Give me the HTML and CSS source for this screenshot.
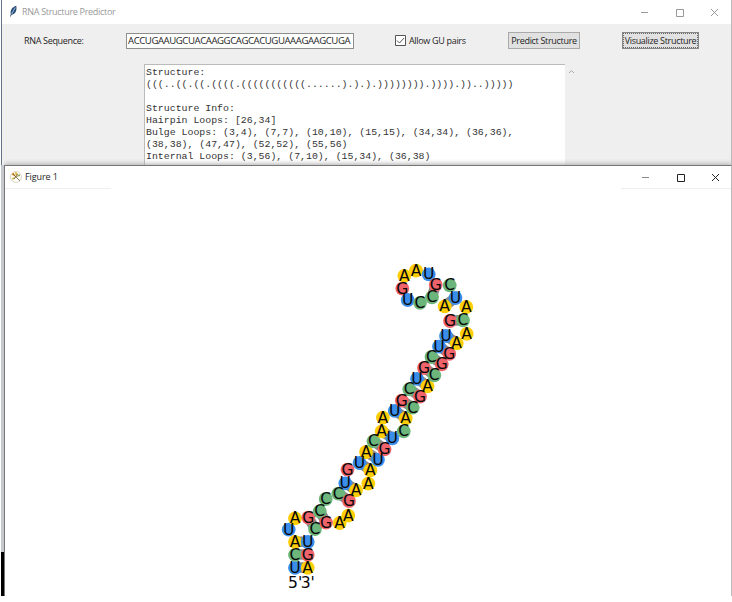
FILE: index.html
```
<!DOCTYPE html>
<html lang="en">
<head>
<meta charset="utf-8">
<title>RNA Structure Predictor</title>
<link rel="stylesheet" href="styles.css">
</head>
<body>
<div class="desktop">
  <main class="predictor">
    <header class="titlebar">
      <svg class="feather" viewBox="0 0 10 14"><path d="M1 13 2 9C1 5 4 1 8 0C9 4 8 9 3 10Z" fill="#294a70"/><path d="M3 9 7 2" stroke="#8db3d8" stroke-width="1.2"/></svg>
      <span class="title">RNA Structure Predictor</span>
      <svg class="controls" viewBox="0 0 80 10"><path d="M1 5.5H8M36.5 2.5H43.5V9.500H36.500ZM71 2 78 9M78 2 71 9"/></svg>
    </header>
    <section class="toolbar">
      <label class="seq-label">RNA Sequence:</label>
      <div class="seq-input"><span>ACCUGAAUGCUACAAGGCAGCACUGUAAAGAAGCUGA</span></div>
      <div class="check"><svg viewBox="0 0 11 11"><path class="box" d="M.5 .5H10.500V10.500H.5Z"/><path class="tick" d="M2 5.500 4.500 8 9 3"/></svg><span>Allow GU pairs</span></div>
      <div class="button predict"><span>Predict Structure</span></div>
      <div class="button visualize"><span>Visualize Structure</span></div>
    </section>
    <section class="output">
<pre class="report">Structure:
(((..((.((.((((.(((((((((((......).).).)))))))).)))).))..)))))

Structure Info:
Hairpin Loops: [26,34]
Bulge Loops: (3,4), (7,7), (10,10), (15,15), (34,34), (36,36),
(38,38), (47,47), (52,52), (55,56)
Internal Loops: (3,56), (7,10), (15,34), (36,38)</pre>
      <svg class="scroll-up" viewBox="0 0 7 5"><path d="M1 4 3.500 1.500 6 4"/></svg>
    </section>
  </main>
  <section class="figure">
    <header class="titlebar">
      <svg class="mpl" viewBox="0 0 12 12"><circle cx="6" cy="6" r="5.500" fill="#fffef8" stroke="#c9c6b6" stroke-width=".7"/><path d="M6 6 1.500 3.500 3.500 1.500Z" fill="#e38c26"/><path d="M6 6 5 1 7.500 2Z" fill="#d8a92f"/><path d="M6 6 9.500 3 10 5Z" fill="#8aa34c"/><path d="M6 6 3 9 2 7Z" fill="#c8ad35"/><path d="M3 3 10 10M8 3 4 8" stroke="#6b5a35" stroke-width=".8"/></svg>
      <span class="title">Figure 1</span>
      <svg class="controls" viewBox="0 0 80 10"><path class="min" d="M1 5.500H8"/><path d="M36.500 2.500H43.500V9.500H36.500ZM71 2 78 9M78 2 71 9"/></svg>
    </header>
    <div class="rules"><i></i><i></i></div>
    <svg class="plot" viewBox="5 189 726 406"><g class="bonds"></g><g class="bases"></g><g class="letters"></g></svg>
  </section>
  <div class="edge"></div>
</div>
<script src="plot.js"></script>
</body>
</html>
```
FILE: styles.css
```
* { box-sizing: border-box; }
body { margin: 0; background: #fff; font-family: "Open Sans", sans-serif; font-size: 9px; color: #252525; }
.desktop { position: relative; width: 732px; height: 602px; overflow: hidden; }
.predictor { height: 165px; margin-left: 1px; border-left: 1px solid #65758a; border-right: 1px solid #bbb; background: #efefef; }
.titlebar { display: flex; align-items: center; background: #fff; }
.predictor .titlebar { height: 24px; padding: 0 11px 0 7px; color: #999; }
.feather { width: 9px; height: 14px; margin-right: 4px; }
.title { line-height: 12px; white-space: nowrap; }
.predictor .title { letter-spacing: -.3px; }
.controls { width: 80px; height: 10px; margin-left: auto; fill: none; stroke: #999; stroke-width: 1; }
.toolbar { display: flex; align-items: center; height: 33px; padding-left: 22px; white-space: nowrap; letter-spacing: -.32px; }
.seq-label { width: 102px; }
.seq-input { width: 228px; height: 16px; padding-left: 1px; line-height: 14px; border: 1px solid #8e8e8e; background: #fff; font-size: 9.6px; letter-spacing: -.43px; }
.check { display: flex; align-items: center; gap: 3px; width: 113px; margin-left: 41px; }
.check svg { width: 11px; height: 11px; fill: #fff; stroke: #555; }
.check .tick { fill: none; }
.button { height: 17px; line-height: 15px; text-align: center; border: 1px solid #aaa; background: #e1e1e1; }
.predict { width: 72px; }
.visualize { width: 77px; margin-left: 42px; border-color: #888; outline: 1px dotted #666; outline-offset: -2px; }
.output { display: flex; align-items: flex-start; height: 101px; padding: 7px 0 0 142px; }
.report { width: 421px; height: 101px; margin: 0; padding: 2px 0 0 1px; border-top: 1px solid #bbb; border-left: 1px solid #bbb; background: #fff; font: 9.88px/11.95px "Liberation Mono", monospace; color: #333; }
.scroll-up { width: 7px; height: 5px; margin: 5px 0 0 3px; fill: none; stroke: #aaa; }
.figure { width: 728px; height: 431px; margin-left: 4px; border: solid #777; border-width: 1px 1px 0; border-right-color: #bbb; background: #fff; box-shadow: 0 -1px 5px #aaa; clip-path: inset(-6px 0 0 0); }
.figure .titlebar { height: 22px; padding: 0 10px 0 5px; }
.figure .titlebar .title { margin-left: 3px; letter-spacing: -.1px; }
.mpl { width: 12px; height: 12px; }
.figure .controls { stroke: #222; }
.figure .controls .min { stroke: #888; }
.rules { display: flex; justify-content: space-between; height: 1px; }
.rules i { width: 106px; background: #eee; }
.rules i:last-child { width: 110px; }
.plot { display: block; width: 726px; height: 406px; }
.bonds { stroke: #888; stroke-width: 10.500px; }
.letters { font: 15.600px "DejaVu Sans", sans-serif; fill: #080808; text-anchor: middle; }
.edge { position: absolute; left: 1px; top: 165px; width: 4px; height: 431px; background: linear-gradient(#c5c8cc 0 387px, #000 387px); border-right: 1px solid #777; }
```
FILE: plot.js
```
// Base letter and centre; bases are listed in opposing stem pairs, then loops.
const pairs = [
  ["U",295,567.5,"A",307.7,567.5], ["C",295,554.500,"G",307.7,554.500],
  ["A",295,541.7,"U",307.7,541.7], ["G",308.3,517.3,"C",315,528.7],
  ["C",319.7,511,"G",326,522.3], ["C",338.3,493.3,"G",349,500.7],
  ["U",345.3,483,"A",356,490], ["U",359.5,462.7,"A",370.3,470],
  ["A",366,451.7,"U",378,459.5], ["C",373.5,441,"G",384.5,449],
  ["A",381.7,431,"U",392.3,438], ["U",394.7,410.500,"A",405.7,418],
  ["G",401.8,400.3,"C",412.7,407.3], ["C",409.3,389,"G",420,396.3],
  ["U",417,378.5,"A",427.5,386], ["G",424,367.7,"C",434.3,375],
  ["C",431.5,356.7,"G",441.7,364], ["U",439,346.3,"G",449.3,353.5],
  ["U",446,335.7,"A",456.7,343], ["G",450,320.7,"C",463,320],
  ["A",444.7,306,"U",455.5,297.7], ["C",432,297,"G",435.7,284.5]
];
const loops = [
  ["U",288.7,529.3], ["A",295,518], ["C",325.7,498.7], ["A",339.7,522.7],
  ["A",348.3,515.3], ["G",347.5,469.3], ["A",368.3,483.3], ["A",382.9,417.3],
  ["C",403.7,431], ["A",466.7,333.5], ["A",466.3,306.7], ["C",449.7,285],
  ["A",404.3,275.500], ["A",416,270.3], ["U",428.7,274], ["G",402.3,288.3],
  ["U",407.7,299.7], ["C",420,302.5]
];
const colors = { A: "#fecf08", C: "#6cb67c", G: "#f0636a", U: "#3a8eea" };
const ns = "http://www.w3.org/2000/svg";
function add(group, tag, attrs, text) {
  const el = document.createElementNS(ns, tag);
  for (const key in attrs) el.setAttribute(key, attrs[key]);
  if (text) el.textContent = text;
  document.querySelector(group).appendChild(el);
}
const bases = [...loops];
for (const [a, x1, y1, b, x2, y2] of pairs) {
  add(".bonds", "line", { x1, y1, x2, y2 });
  bases.push([a, x1, y1], [b, x2, y2]);
}
for (const [base, x, y] of bases) {
  add(".bases", "circle", { cx: x, cy: y + .3, r: 6.9, fill: colors[base] });
  add(".letters", "text", { x, y: y + 5.4 }, base);
}
add(".letters", "text", { x: 295.2, y: 588.3 }, "5'");
add(".letters", "text", { x: 307.8, y: 588.3 }, "3'");
```
